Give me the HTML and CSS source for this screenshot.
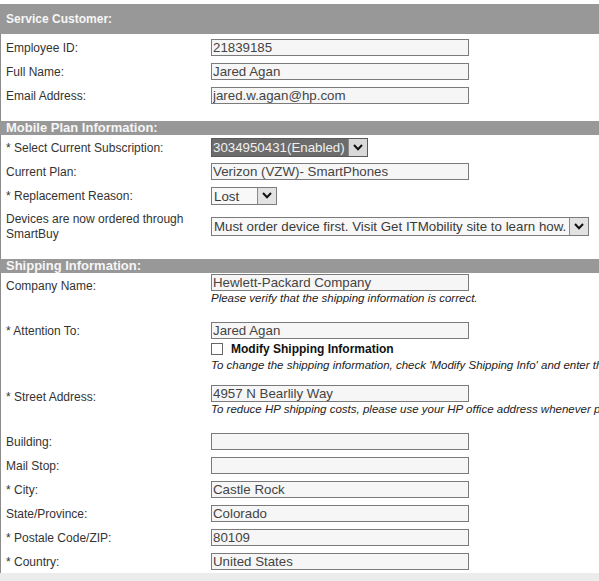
FILE: index.html
```html
<!DOCTYPE html>
<html lang="en">
<head>
<meta charset="utf-8">
<title>Service Customer</title>
<link rel="stylesheet" href="styles.css">
</head>
<body>
<div class="page">
  <div class="head head-main">Service Customer:</div>
  <div class="section sec-1">
    <div class="row"><span class="lbl">Employee ID:</span><div class="val"><input class="field" value="21839185" readonly></div></div>
    <div class="row"><span class="lbl">Full Name:</span><div class="val"><input class="field" value="Jared Agan" readonly></div></div>
    <div class="row"><span class="lbl">Email Address:</span><div class="val"><input class="field" value="jared.w.agan@hp.com" readonly></div></div>
  </div>

  <div class="head">Mobile Plan Information:</div>
  <div class="section sec-2">
    <div class="row"><span class="lbl">* Select Current Subscription:</span>
      <div class="val"><div class="select select-active select-sub"><span class="select-text">3034950431(Enabled)</span><span class="select-btn"><svg width="10" height="7" viewBox="0 0 10 7"><polyline points="1,1 5,5.2 9,1" fill="none" stroke="#111" stroke-width="2"/></svg></span></div></div></div>
    <div class="row"><span class="lbl">Current Plan:</span><div class="val"><input class="field" value="Verizon (VZW)- SmartPhones" readonly></div></div>
    <div class="row"><span class="lbl">* Replacement Reason:</span>
      <div class="val"><div class="select select-lost"><span class="select-text">Lost</span><span class="select-btn"><svg width="10" height="7" viewBox="0 0 10 7"><polyline points="1,1 5,5.2 9,1" fill="none" stroke="#111" stroke-width="2"/></svg></span></div></div></div>
    <div class="row row-devices"><span class="lbl">Devices are now ordered through SmartBuy</span>
      <div class="val"><div class="select select-dev"><span class="select-text">Must order device first. Visit Get ITMobility site to learn how.</span><span class="select-btn"><svg width="10" height="7" viewBox="0 0 10 7"><polyline points="1,1 5,5.2 9,1" fill="none" stroke="#111" stroke-width="2"/></svg></span></div></div></div>
  </div>

  <div class="head">Shipping Information:</div>
  <div class="section sec-3">
    <div class="row row-top row-company"><span class="lbl">Company Name:</span>
      <div class="val"><input class="field" value="Hewlett-Packard Company" readonly><div class="note">Please verify that the shipping information is correct.</div></div></div>
    <div class="row row-top row-attn"><span class="lbl lbl-tight">* Attention To:</span>
      <div class="val"><input class="field" value="Jared Agan" readonly>
        <label class="check"><input type="checkbox" class="box"><span>Modify Shipping Information</span></label>
        <div class="note">To change the shipping information, check 'Modify Shipping Info' and enter the new address.</div></div></div>
    <div class="row row-top row-street"><span class="lbl">* Street Address:</span>
      <div class="val"><input class="field" value="4957 N Bearlily Way" readonly><div class="note">To reduce HP shipping costs, please use your HP office address whenever possible.</div></div></div>
    <div class="row"><span class="lbl">Building:</span><div class="val"><input class="field" value="" readonly></div></div>
    <div class="row"><span class="lbl">Mail Stop:</span><div class="val"><input class="field" value="" readonly></div></div>
    <div class="row"><span class="lbl">* City:</span><div class="val"><input class="field" value="Castle Rock" readonly></div></div>
    <div class="row"><span class="lbl">State/Province:</span><div class="val"><input class="field" value="Colorado" readonly></div></div>
    <div class="row"><span class="lbl">* Postale Code/ZIP:</span><div class="val"><input class="field" value="80109" readonly></div></div>
    <div class="row"><span class="lbl">* Country:</span><div class="val"><input class="field" value="United States" readonly></div></div>
  </div>
  <div class="footer"></div>
</div>
</body>
</html>
```
FILE: styles.css
```css
html, body {
  margin: 0;
  padding: 0;
  background: #ffffff;
  overflow: hidden;
}
body {
  font-family: "Liberation Sans", Arial, sans-serif;
  color: #333333;
}
.page {
  padding-top: 4px;
  width: 599px;
}
.head {
  background: #989898;
  color: #f6f6f6;
  font-weight: bold;
  font-size: 13px;
  height: 14px;
  line-height: 14px;
  padding-left: 6px;
  white-space: nowrap;
}
.head-main {
  height: 30px;
  line-height: 31px;
  font-size: 12px;
}
.section {
  border-left: 1px solid #8c8c8c;
  padding-left: 5px;
}
.sec-1 {
  padding-top: 1px;
  padding-bottom: 14px;
}
.sec-2 {
  padding-bottom: 14px;
}
.sec-3 {
  padding-top: 1px;
}
.row {
  display: grid;
  grid-template-columns: 205px 1fr;
  align-items: center;
  height: 24px;
}
.lbl {
  font-size: 12px;
  line-height: 15px;
  color: #333333;
  padding-top: 2px;
}
.val {
  display: flex;
  flex-direction: column;
  align-items: flex-start;
  white-space: nowrap;
  min-width: 0;
}
.field {
  box-sizing: border-box;
  width: 258px;
  height: 17px;
  margin: 0;
  padding: 0 1px;
  border: 1px solid #7b7b7b;
  background: #f6f6f6;
  font-family: "Liberation Sans", Arial, sans-serif;
  font-size: 13.3px;
  line-height: 15px;
  color: #444444;
  outline: none;
}
.select {
  box-sizing: border-box;
  display: flex;
  align-items: stretch;
  border: 1px solid #7b7b7b;
  background: #f8f8f8;
  font-size: 13.3px;
  line-height: 17px;
  color: #3a3a3a;
}
.select-text {
  padding: 0 3px 0 2px;
  white-space: nowrap;
}
.select-btn {
  width: 18px;
  display: flex;
  align-items: center;
  justify-content: center;
  background: #e2e2e2;
  border-left: 1px solid #8a8a8a;
}
.select-sub {
  height: 19px;
  border-color: #5a5a5a;
}
.select-active .select-text {
  background: #6c6c6c;
  color: #f0f0f0;
  padding: 0 3px 0 1px;
}
.select-active .select-btn {
  background: #d9d9d9;
}
.select-lost {
  width: 66px;
  height: 18px;
  margin-top: 1px;
}
.select-lost .select-text {
  flex: 1;
}
.select-dev {
  height: 19px;
}
.row-devices {
  height: 38px;
}
.row-devices .lbl {
  padding-top: 1px;
}
.row-top {
  align-items: start;
  height: auto;
}
.row-top .lbl {
  padding-top: 5px;
}
.row-top .lbl-tight {
  padding-top: 2px;
}
.note {
  font-size: 11.5px;
  line-height: 14px;
  font-style: italic;
  color: #222222;
}
.row-company .val {
  padding-bottom: 17px;
}
.row-attn .val {
  padding-bottom: 13px;
}
.row-street .val {
  padding-bottom: 13px;
}
.check {
  display: flex;
  align-items: center;
  height: 18px;
  margin-top: 1px;
  font-size: 12px;
  font-weight: bold;
  color: #111111;
}
.box {
  appearance: none;
  -webkit-appearance: none;
  box-sizing: border-box;
  width: 12px;
  height: 12px;
  margin: 0 8px 0 0;
  border: 1px solid #666666;
  background: #ffffff;
}
.footer {
  height: 10px;
  background: #ececec;
}
```
